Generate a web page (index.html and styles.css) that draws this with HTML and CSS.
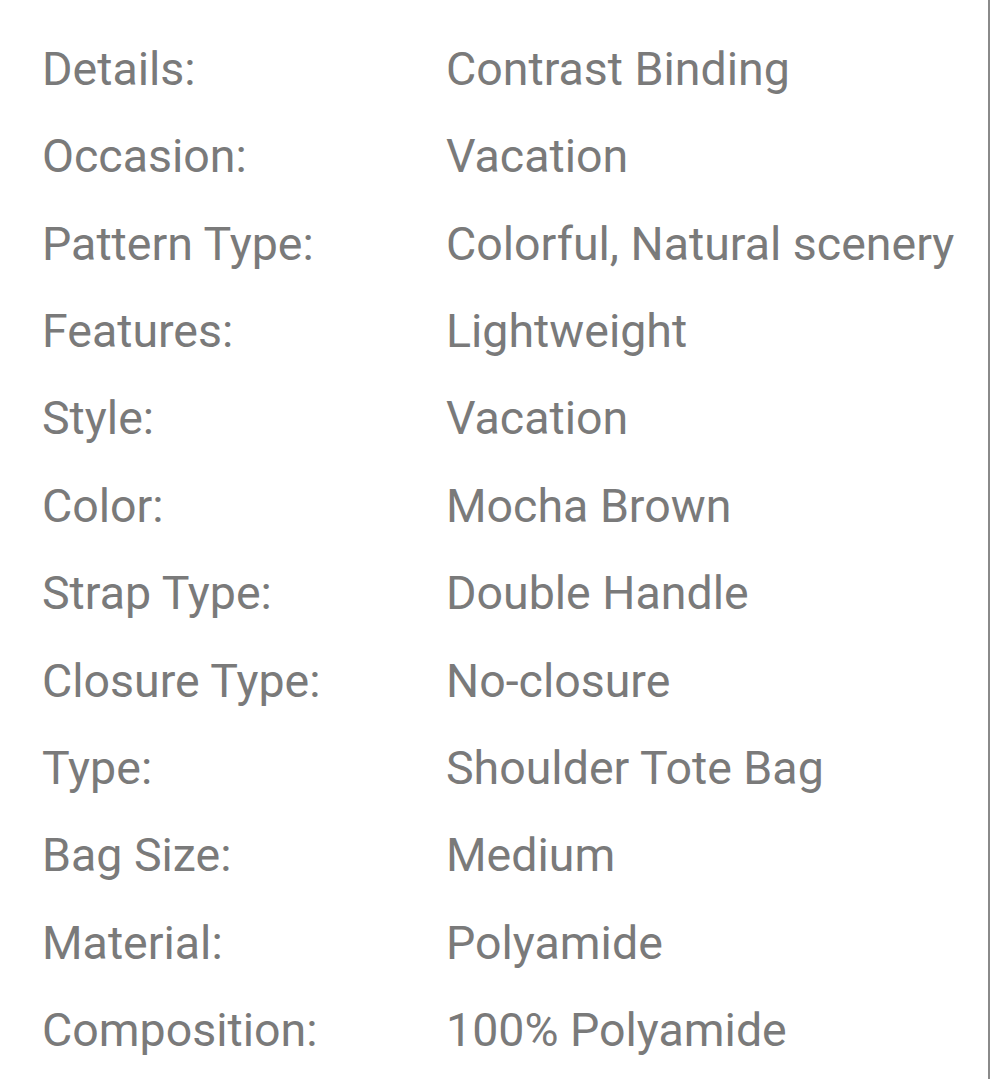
FILE: index.html
```html
<!DOCTYPE html>
<html>
<head>
<meta charset="utf-8">
<link rel="stylesheet" href="styles.css">
</head>
<body>
<div class="panel">
  <dl class="specs">
    <div class="row"><dt>Details:</dt><dd>Contrast Binding</dd></div>
    <div class="row"><dt>Occasion:</dt><dd>Vacation</dd></div>
    <div class="row"><dt>Pattern Type:</dt><dd>Colorful, Natural scenery</dd></div>
    <div class="row"><dt>Features:</dt><dd>Lightweight</dd></div>
    <div class="row"><dt>Style:</dt><dd>Vacation</dd></div>
    <div class="row"><dt>Color:</dt><dd>Mocha Brown</dd></div>
    <div class="row"><dt>Strap Type:</dt><dd>Double Handle</dd></div>
    <div class="row"><dt>Closure Type:</dt><dd>No-closure</dd></div>
    <div class="row"><dt>Type:</dt><dd>Shoulder Tote Bag</dd></div>
    <div class="row"><dt>Bag Size:</dt><dd>Medium</dd></div>
    <div class="row"><dt>Material:</dt><dd>Polyamide</dd></div>
    <div class="row"><dt>Composition:</dt><dd>100% Polyamide</dd></div>
  </dl>
</div>
</body>
</html>
```
FILE: styles.css
```css
html, body {
  margin: 0;
  padding: 0;
  background: #fff;
}
.panel {
  width: 988px;
  height: 1079px;
  border-right: 2px solid #8a8a8a;
  box-sizing: content-box;
  overflow: hidden;
}
.specs {
  margin: 0;
  padding: 26px 0 0 42px;
  font-family: Roboto, "Noto Sans", sans-serif;
  font-size: 46.5px;
  color: #7a7a7a;
}
.row {
  display: grid;
  grid-template-columns: 404px 1fr;
  height: 87.36px;
  line-height: 87.36px;
}
dt, dd {
  margin: 0;
  white-space: nowrap;
}
```
